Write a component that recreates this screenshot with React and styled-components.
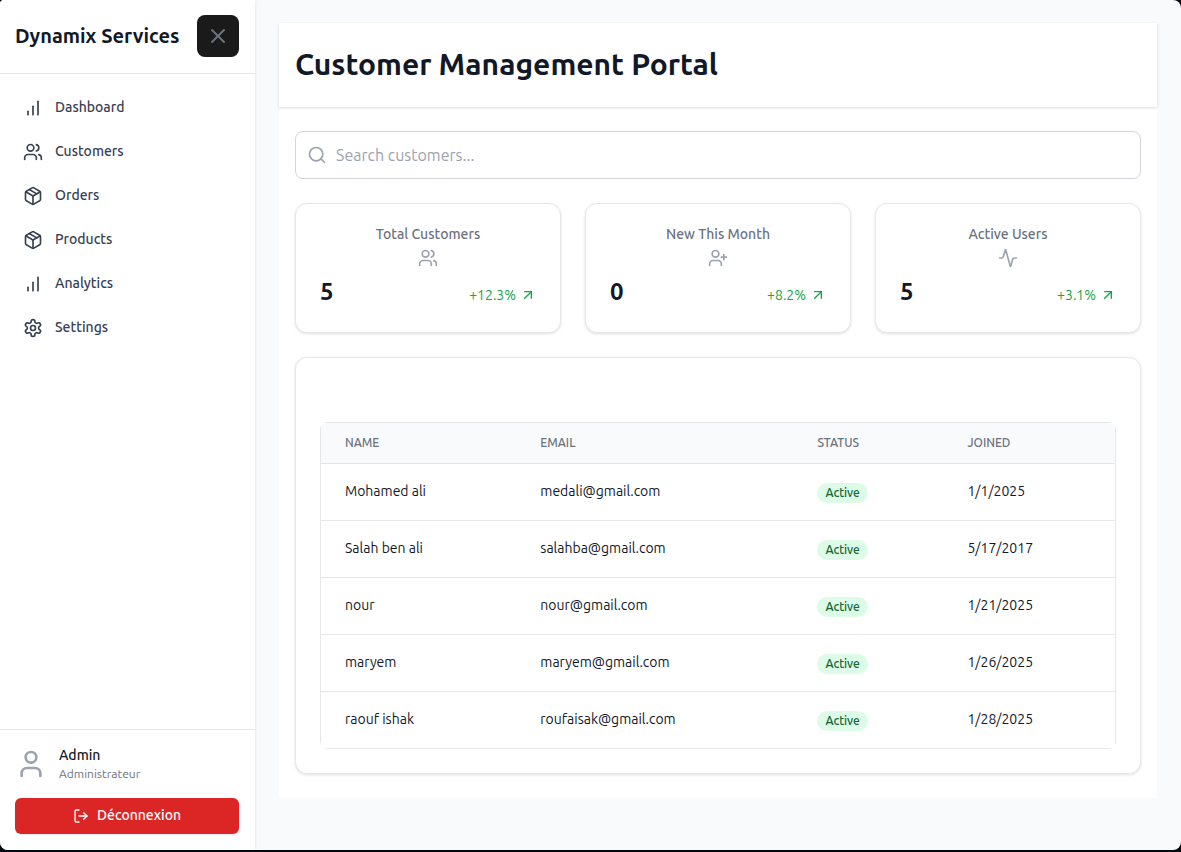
import React from "react";
import styled, { createGlobalStyle, css } from "styled-components";

const GlobalStyle = createGlobalStyle`
  *, *::before, *::after { box-sizing: border-box; }
  body {
    margin: 0;
    background: #030712;
    color: #111827;
    font-family: Ubuntu, "Noto Sans", "Open Sans", sans-serif;
    font-size: 14px;
    line-height: 20px;
  }
  h1, h2, p, ul { margin: 0; padding: 0; }
  button, input { font: inherit; }
`;

const Shell = styled.div`
  display: flex;
  min-height: calc(100vh - 2px);
  border-radius: 4px 8px 8px 8px;
  overflow: hidden;
  background: #f9fafc;
`;

const Sidebar = styled.aside`
  flex: 0 0 255px;
  display: flex;
  flex-direction: column;
  background: #fff;
  box-shadow: 0 1px 3px rgba(0, 0, 0, 0.12);
`;

const SidebarHeader = styled.div`
  display: flex;
  align-items: center;
  justify-content: space-between;
  padding: 15px 16px 16px 15px;
  border-bottom: 1px solid #e5e7eb;
`;

const Brand = styled.h2`
  font-size: 20px;
  font-weight: 600;
  line-height: 28px;
  white-space: nowrap;
`;

const CloseButton = styled.button`
  display: flex;
  align-items: center;
  justify-content: center;
  width: 42px;
  height: 42px;
  padding: 0;
  border: 0;
  border-radius: 8px;
  background: #1a1a1a;
  color: #6b7280;
`;

const Nav = styled.nav`
  flex: 1;
  padding: 12px 16px 12px 15px;
`;

const NavList = styled.ul`
  list-style: none;
`;

const NavLink = styled.a`
  display: flex;
  align-items: center;
  gap: 12px;
  height: 44px;
  padding: 0 8px;
  color: #374151;
  font-weight: 500;
  text-decoration: none;
`;

const NavLabel = styled.span`
  padding-bottom: 2px;
`;

const SidebarFooter = styled.div`
  padding: 15px 16px 16px 15px;
  border-top: 1px solid #e5e7eb;
`;

const Profile = styled.div`
  display: flex;
  align-items: center;
  gap: 12px;
  margin-bottom: 16px;
  color: #9ca3af;
`;

const ProfileName = styled.p`
  padding-bottom: 1px;
  color: #111827;
  font-weight: 500;
`;

const ProfileRole = styled.p`
  color: #6b7280;
  font-size: 12px;
  line-height: 16px;
`;

const LogoutButton = styled.button`
  display: flex;
  align-items: center;
  justify-content: center;
  gap: 8px;
  width: 100%;
  height: 36px;
  border: 0;
  border-radius: 6px;
  background: #dc2626;
  color: #fff;
  font-weight: 500;
  box-shadow: 0 1px 2px rgba(0, 0, 0, 0.08);
`;

const Main = styled.main`
  flex: 1;
  min-width: 0;
  padding: 23px 24px 24px;
`;

const Panel = styled.div`
  background: #fff;
`;

const PanelHeader = styled.header`
  padding: 23px 16px 25px;
  box-shadow: 0 1px 3px rgba(0, 0, 0, 0.14);
`;

const Title = styled.h1`
  font-size: 30px;
  font-weight: 600;
  line-height: 36px;
`;

const PanelBody = styled.div`
  display: flex;
  flex-direction: column;
  gap: 24px;
  padding: 24px 16px;
`;

const SearchField = styled.label`
  display: flex;
  align-items: center;
  gap: 9px;
  height: 48px;
  padding: 0 11px;
  border: 1px solid #d1d5db;
  border-radius: 8px;
  color: #9ca3af;
`;

const SearchInput = styled.input`
  flex: 1;
  min-width: 0;
  padding: 0;
  border: 0;
  outline: 0;
  background: transparent;
  color: #111827;
  font-size: 16px;
  &::placeholder { color: #9ca3af; opacity: 1; }
`;

const surface = css`
  background: #fff;
  border: 1px solid #e5e7eb;
  border-radius: 12px;
  box-shadow: 0 1px 3px rgba(0, 0, 0, 0.12);
`;

const StatGrid = styled.div`
  display: grid;
  grid-template-columns: repeat(3, minmax(0, 1fr));
  gap: 24px;
`;

const StatCard = styled.section`
  ${surface}
  display: flex;
  flex-direction: column;
  padding: 20px 24px 24px;
`;

const StatHeading = styled.div`
  display: flex;
  flex-direction: column;
  align-items: center;
  gap: 4px;
  margin-bottom: 8px;
  color: #9ca3af;
`;

const StatLabel = styled.h2`
  color: #6b7280;
  font-size: 14px;
  font-weight: 500;
`;

const StatFigures = styled.div`
  display: flex;
  align-items: baseline;
  justify-content: space-between;
`;

const StatValue = styled.p`
  font-size: 24px;
  font-weight: 600;
  line-height: 32px;
`;

const StatTrend = styled.p`
  display: flex;
  align-items: center;
  gap: 4px;
  color: #16a34a;
`;

const TableCard = styled.section`
  ${surface}
  padding: 64px 24px 24px;
`;

const TableClip = styled.div`
  border-radius: 8px;
  overflow: hidden;
`;

const TableFrame = styled.div`
  border: 1px solid #e5e7eb;
`;

const Table = styled.table`
  width: 100%;
  table-layout: fixed;
  border-collapse: separate;
  border-spacing: 0;
`;

const HeadCell = styled.th`
  width: ${({ $width }) => $width};
  height: 41px;
  padding: 0 24px 1px;
  border-bottom: 1px solid #e5e7eb;
  background: #f9fafc;
  color: #6b7280;
  font-size: 12px;
  font-weight: 500;
  text-align: left;
  text-transform: uppercase;
`;

const Row = styled.tr`
  &:last-child td { height: 56px; border-bottom: 0; }
`;

const Cell = styled.td`
  height: 57px;
  padding: 0 24px ${({ $raised }) => ($raised ? "2px" : "0")};
  border-bottom: 1px solid #e5e7eb;
  white-space: nowrap;
`;

const Badge = styled.span`
  display: inline-block;
  padding: 0 8px;
  border-radius: 10px;
  background: #dcfce7;
  color: #166534;
  font-size: 12px;
  font-weight: 500;
`;

const Glyph = styled.svg`
  flex: none;
  display: block;
  fill: none;
  stroke: currentColor;
  stroke-width: 2;
  stroke-linecap: round;
  stroke-linejoin: round;
`;

const PATHS = {
  close: ["M18 6 6 18", "m6 6 12 12"],
  bars: ["M12 20V10", "M18 20V4", "M6 20v-4"],
  users: [
    "M16 21v-2a4 4 0 0 0-4-4H6a4 4 0 0 0-4 4v2",
    "M13 7a4 4 0 1 1-8 0 4 4 0 0 1 8 0",
    "M22 21v-2a4 4 0 0 0-3-3.87",
    "M16 3.13a4 4 0 0 1 0 7.75",
  ],
  box: [
    "m7.5 4.27 9 5.15",
    "M21 8a2 2 0 0 0-1-1.73l-7-4a2 2 0 0 0-2 0l-7 4A2 2 0 0 0 3 8v8a2 2 0 0 0 1 1.73l7 4a2 2 0 0 0 2 0l7-4A2 2 0 0 0 21 16Z",
    "m3.3 7 8.7 5 8.7-5",
    "M12 22V12",
  ],
  gear: [
    "M12.22 2h-.44a2 2 0 0 0-2 2v.18a2 2 0 0 1-1 1.73l-.43.25a2 2 0 0 1-2 0l-.15-.08a2 2 0 0 0-2.73.73l-.22.38a2 2 0 0 0 .73 2.73l.15.1a2 2 0 0 1 1 1.72v.51a2 2 0 0 1-1 1.74l-.15.09a2 2 0 0 0-.73 2.73l.22.38a2 2 0 0 0 2.73.73l.15-.08a2 2 0 0 1 2 0l.43.25a2 2 0 0 1 1 1.73V20a2 2 0 0 0 2 2h.44a2 2 0 0 0 2-2v-.18a2 2 0 0 1 1-1.73l.43-.25a2 2 0 0 1 2 0l.15.08a2 2 0 0 0 2.73-.73l.22-.39a2 2 0 0 0-.73-2.73l-.15-.08a2 2 0 0 1-1-1.74v-.5a2 2 0 0 1 1-1.74l.15-.09a2 2 0 0 0 .73-2.73l-.22-.38a2 2 0 0 0-2.73-.73l-.15.08a2 2 0 0 1-2 0l-.43-.25a2 2 0 0 1-1-1.73V4a2 2 0 0 0-2-2z",
    "M15 12a3 3 0 1 1-6 0 3 3 0 0 1 6 0",
  ],
  user: ["M19 21v-2a4 4 0 0 0-4-4H9a4 4 0 0 0-4 4v2", "M16 7a4 4 0 1 1-8 0 4 4 0 0 1 8 0"],
  logout: ["M9 21H5a2 2 0 0 1-2-2V5a2 2 0 0 1 2-2h4", "m16 17 5-5-5-5", "M21 12H9"],
  search: ["M19 11a8 8 0 1 1-16 0 8 8 0 0 1 16 0", "m21 21-4.3-4.3"],
  userPlus: [
    "M16 21v-2a4 4 0 0 0-4-4H6a4 4 0 0 0-4 4v2",
    "M13 7a4 4 0 1 1-8 0 4 4 0 0 1 8 0",
    "M19 8v6",
    "M22 11h-6",
  ],
  activity: [
    "M22 12h-2.48a2 2 0 0 0-1.93 1.46l-2.35 8.36a.25.25 0 0 1-.48 0L9.24 2.18a.25.25 0 0 0-.48 0l-2.35 8.36A2 2 0 0 1 4.49 12H2",
  ],
  trend: ["M7 7h10v10", "M7 17 17 7"],
};

function Icon({ name, size = 20 }) {
  return (
    <Glyph width={size} height={size} viewBox="0 0 24 24" aria-hidden="true">
      {PATHS[name].map((d) => (
        <path key={d} d={d} />
      ))}
    </Glyph>
  );
}

const NAV_ITEMS = [
  ["Dashboard", "bars"],
  ["Customers", "users"],
  ["Orders", "box"],
  ["Products", "box"],
  ["Analytics", "bars"],
  ["Settings", "gear"],
];

const STATS = [
  { label: "Total Customers", icon: "users", value: "5", trend: "+12.3%" },
  { label: "New This Month", icon: "userPlus", value: "0", trend: "+8.2%" },
  { label: "Active Users", icon: "activity", value: "5", trend: "+3.1%" },
];

const COLUMNS = [
  ["Name", "24.6%"],
  ["Email", "34.9%"],
  ["Status", "18.9%"],
  ["Joined", "auto"],
];

const CUSTOMERS = [
  ["Mohamed ali", "medali@gmail.com", "1/1/2025"],
  ["Salah ben ali", "salahba@gmail.com", "5/17/2017"],
  ["nour", "nour@gmail.com", "1/21/2025"],
  ["maryem", "maryem@gmail.com", "1/26/2025"],
  ["raouf ishak", "roufaisak@gmail.com", "1/28/2025"],
];

export default function App() {
  return (
    <>
      <GlobalStyle />
      <Shell>
        <Sidebar>
          <SidebarHeader>
            <Brand>Dynamix Services</Brand>
            <CloseButton type="button" aria-label="Close menu">
              <Icon name="close" size={24} />
            </CloseButton>
          </SidebarHeader>
          <Nav>
            <NavList>
              {NAV_ITEMS.map(([label, icon]) => (
                <li key={label}>
                  <NavLink href={`#${label.toLowerCase()}`}>
                    <Icon name={icon} />
                    <NavLabel>{label}</NavLabel>
                  </NavLink>
                </li>
              ))}
            </NavList>
          </Nav>
          <SidebarFooter>
            <Profile>
              <Icon name="user" size={32} />
              <div>
                <ProfileName>Admin</ProfileName>
                <ProfileRole>Administrateur</ProfileRole>
              </div>
            </Profile>
            <LogoutButton type="button">
              <Icon name="logout" size={16} />
              <NavLabel>Déconnexion</NavLabel>
            </LogoutButton>
          </SidebarFooter>
        </Sidebar>

        <Main>
          <Panel>
            <PanelHeader>
              <Title>Customer Management Portal</Title>
            </PanelHeader>
            <PanelBody>
              <SearchField>
                <Icon name="search" />
                <SearchInput type="text" placeholder="Search customers..." aria-label="Search customers" />
              </SearchField>

              <StatGrid>
                {STATS.map((stat) => (
                  <StatCard key={stat.label}>
                    <StatHeading>
                      <StatLabel>{stat.label}</StatLabel>
                      <Icon name={stat.icon} />
                    </StatHeading>
                    <StatFigures>
                      <StatValue>{stat.value}</StatValue>
                      <StatTrend>
                        {stat.trend}
                        <Icon name="trend" size={16} />
                      </StatTrend>
                    </StatFigures>
                  </StatCard>
                ))}
              </StatGrid>

              <TableCard>
                <TableClip>
                  <TableFrame>
                    <Table>
                      <thead>
                        <tr>
                          {COLUMNS.map(([label, width]) => (
                            <HeadCell key={label} scope="col" $width={width}>
                              {label}
                            </HeadCell>
                          ))}
                        </tr>
                      </thead>
                      <tbody>
                        {CUSTOMERS.map(([name, email, joined]) => (
                          <Row key={email}>
                            <Cell $raised>{name}</Cell>
                            <Cell $raised>{email}</Cell>
                            <Cell>
                              <Badge>Active</Badge>
                            </Cell>
                            <Cell $raised>{joined}</Cell>
                          </Row>
                        ))}
                      </tbody>
                    </Table>
                  </TableFrame>
                </TableClip>
              </TableCard>
            </PanelBody>
          </Panel>
        </Main>
      </Shell>
    </>
  );
}
